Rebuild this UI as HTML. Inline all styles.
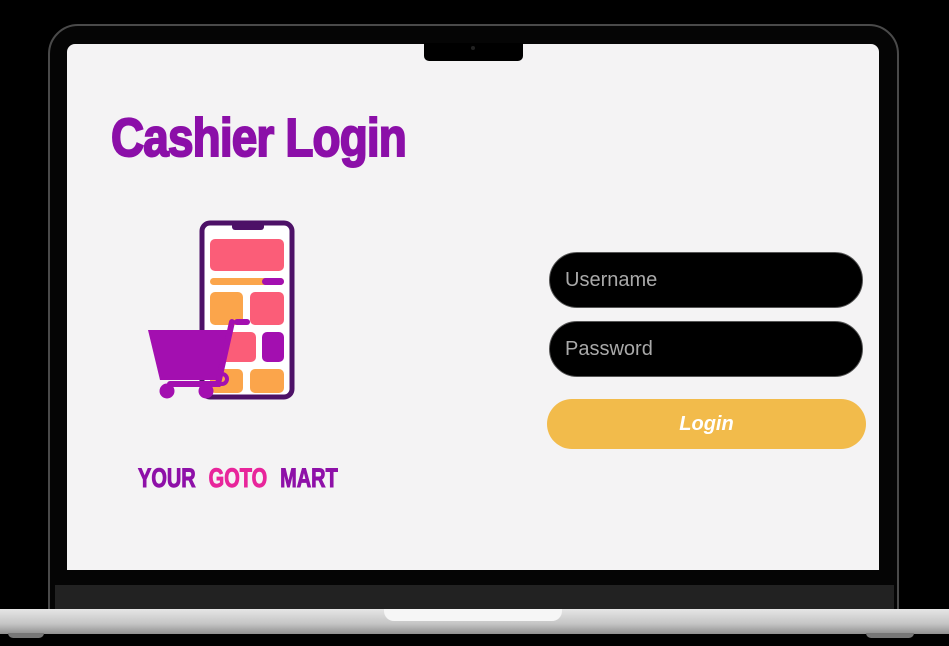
<!DOCTYPE html>
<html><head><meta charset="utf-8"><style>
*{margin:0;padding:0;box-sizing:border-box}
body{width:949px;height:646px;background:#000;position:relative;overflow:hidden;font-family:"Liberation Sans",sans-serif}
.a{position:absolute}
.t{font-weight:bold;white-space:nowrap;transform-origin:left top;}
.in{position:absolute;background:#000;border-radius:28px;border:1px solid #555;color:#a9a9a9;font-size:20px;padding-left:15px;display:flex;align-items:center}
</style></head><body>
<div class="a" style="left:48px;top:24px;width:851px;height:600px;border:2px solid #4a4a4a;border-radius:30px 30px 0 0;background:#050505"></div>
<div class="a" style="left:67px;top:44px;width:812px;height:526px;background:#f4f3f4;border-radius:8px 8px 0 0"></div>
<div class="a" style="left:424px;top:43px;width:99px;height:18px;background:#000;border-radius:0 0 5px 5px"></div>
<div class="a" style="left:471px;top:46px;width:4px;height:4px;background:#222;border-radius:50%"></div>
<div class="a" style="left:55px;top:585px;width:839px;height:24px;background:#222"></div>
<div class="a" style="left:0;top:609px;width:949px;height:25px;background:linear-gradient(#e6e6e6,#c4c4c4 60%,#909090)"></div>
<div class="a" style="left:384px;top:609px;width:178px;height:12px;background:#f6f6f6;border-radius:0 0 10px 10px"></div>
<div class="a" style="left:8px;top:633px;width:36px;height:5px;background:#777;border-radius:0 0 6px 6px"></div>
<div class="a" style="left:866px;top:633px;width:48px;height:5px;background:#777;border-radius:0 0 6px 6px"></div>

<div class="a t" style="left:111px;top:108px;font-size:54px;color:#8b0fa8;transform:scaleX(0.85);letter-spacing:-1px;line-height:60px;-webkit-text-stroke:2px #8b0fa8">Cashier Login</div>

<svg class="a" style="left:140px;top:215px" width="160" height="190" viewBox="0 0 160 190">
<rect x="62" y="8" width="90" height="174" rx="8" fill="#fff" stroke="#4d1167" stroke-width="5"/>
<path d="M92 8h32v4a3 3 0 0 1-3 3h-26a3 3 0 0 1-3-3z" fill="#4d1167"/>
<rect x="70" y="24" width="74" height="32" rx="5" fill="#fb5d78"/>
<rect x="70" y="63" width="74" height="7" rx="3.5" fill="#fba54b"/>
<rect x="122" y="63" width="22" height="7" rx="3.5" fill="#a30fb0"/>
<rect x="70" y="77" width="33" height="33" rx="5" fill="#fba54b"/>
<rect x="110" y="77" width="34" height="33" rx="5" fill="#fb5d78"/>
<rect x="70" y="117" width="46" height="30" rx="5" fill="#fb5d78"/>
<rect x="122" y="117" width="22" height="30" rx="5" fill="#a30fb0"/>
<rect x="70" y="154" width="33" height="24" rx="5" fill="#fba54b"/>
<rect x="110" y="154" width="34" height="24" rx="5" fill="#fba54b"/>
<path d="M8 115h84l-12 50H20z" fill="#a30fb0"/>
<path d="M97 107h10" stroke="#a30fb0" stroke-width="6" stroke-linecap="round"/>
<path d="M92 107l-14 62h-48" stroke="#a30fb0" stroke-width="6" fill="none" stroke-linecap="round"/>
<path d="M78 169h4a5 5 0 0 0 0-10" stroke="#a30fb0" stroke-width="4" fill="none"/>
<circle cx="27" cy="176" r="7.5" fill="#a30fb0"/>
<circle cx="66" cy="176" r="7.5" fill="#a30fb0"/>
</svg>

<div class="a t" style="left:138px;top:462px;font-size:27px;color:#8e10a8;transform:scaleX(0.74);word-spacing:10px;line-height:32px;-webkit-text-stroke:1px #8e10a8">YOUR <span style="color:#e8259b;-webkit-text-stroke:1px #e8259b">GOTO</span> MART</div>

<div class="in" style="left:549px;top:252px;width:314px;height:56px">Username</div>
<div class="in" style="left:549px;top:321px;width:314px;height:56px">Password</div>
<div class="a" style="left:547px;top:399px;width:319px;height:50px;background:#f2bb4b;border-radius:25px;color:#fff;font-size:20px;font-weight:bold;font-style:italic;display:flex;align-items:center;justify-content:center">Login</div>
</body></html>
